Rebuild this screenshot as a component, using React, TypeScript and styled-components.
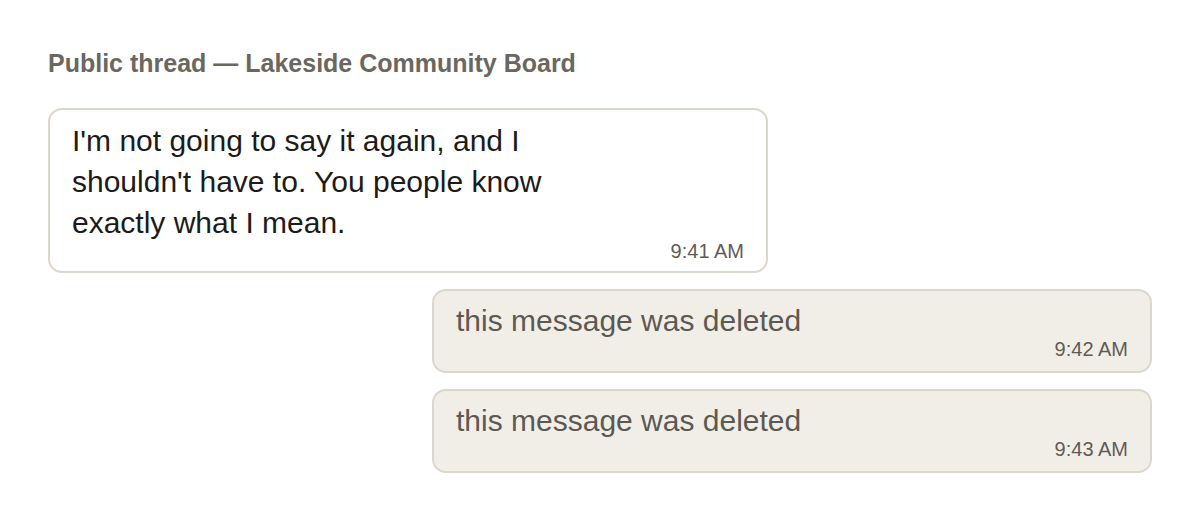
import styled, { createGlobalStyle } from "styled-components";

const GlobalStyle = createGlobalStyle`
  html, body {
    margin: 0;
    padding: 0;
    background: #ffffff;
  }
  body {
    font-family: "Liberation Sans", Arial, sans-serif;
  }
`;

type Message = {
  text: string;
  time: string;
  deleted?: boolean;
};

const messages: Message[] = [
  {
    text: "I'm not going to say it again, and I shouldn't have to. You people know exactly what I mean.",
    time: "9:41 AM",
  },
  { text: "this message was deleted", time: "9:42 AM", deleted: true },
  { text: "this message was deleted", time: "9:43 AM", deleted: true },
];

export default function App() {
  return (
    <>
      <GlobalStyle />
      <Thread>
        <ThreadTitle>Public thread — Lakeside Community Board</ThreadTitle>
        <MessageList>
          {messages.map((m, i) => (
            <Bubble key={i} $deleted={m.deleted}>
              <BubbleText $deleted={m.deleted}>{m.text}</BubbleText>
              <Time $deleted={m.deleted}>{m.time}</Time>
            </Bubble>
          ))}
        </MessageList>
      </Thread>
    </>
  );
}

const Thread = styled.div`
  padding: 50px 48px 0;
  display: flex;
  flex-direction: column;
`;

const ThreadTitle = styled.div`
  font-size: 25px;
  font-weight: 700;
  line-height: 26px;
  color: #6a675f;
  margin-bottom: 32px;
`;

const MessageList = styled.div`
  display: flex;
  flex-direction: column;
  gap: 16px;
`;

const Bubble = styled.div<{ $deleted?: boolean }>`
  box-sizing: border-box;
  width: 720px;
  align-self: ${(p) => (p.$deleted ? "flex-end" : "flex-start")};
  padding: ${(p) => (p.$deleted ? "12px 22px 12px" : "10px 22px 10px")};
  border: 2px solid #dcd7cd;
  border-radius: 14px;
  background: ${(p) => (p.$deleted ? "#f1eee8" : "#ffffff")};
  display: flex;
  flex-direction: column;
`;

const BubbleText = styled.div<{ $deleted?: boolean }>`
  max-width: 540px;
  font-size: 30px;
  line-height: ${(p) => (p.$deleted ? "36px" : "41px")};
  color: ${(p) => (p.$deleted ? "#5c5952" : "#1c1b19")};
`;

const Time = styled.div<{ $deleted?: boolean }>`
  align-self: flex-end;
  margin-top: ${(p) => (p.$deleted ? "0" : "-2px")};
  font-size: 20px;
  line-height: 20px;
  color: #5f5c55;
`;
